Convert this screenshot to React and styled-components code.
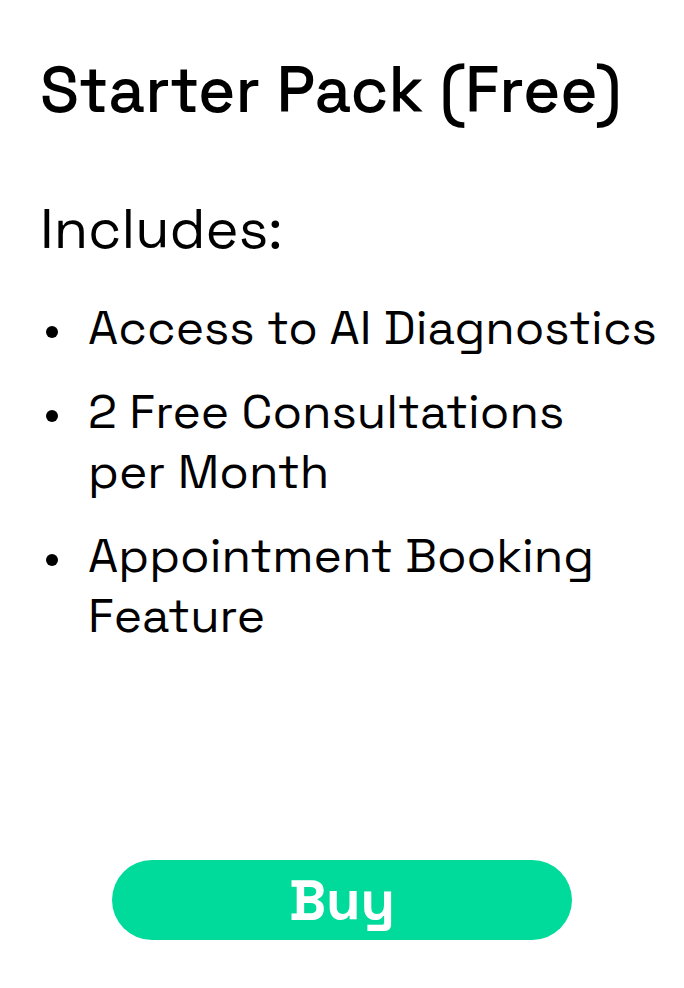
import React from "react";
import styled, { createGlobalStyle } from "styled-components";

const GlobalStyle = createGlobalStyle`
  *, *::before { box-sizing: border-box; }
  body { margin: 0; background: #fff; }
`;

const Card = styled.main`
  display: flex;
  flex-direction: column;
  min-height: 100vh;
  padding: 48px 24px;
  color: #000;
  font-family: "Space Grotesk", Inter, sans-serif;
`;

const Details = styled.section`
  padding-left: 16px;
`;

const Title = styled.h1`
  margin: 0;
  font-size: 64px;
  line-height: 84px;
  font-weight: 500;
`;

const Subtitle = styled.h2`
  margin: 62px 0 0;
  font-size: 56px;
  line-height: 70px;
  font-weight: 400;
`;

const Features = styled.ul`
  display: flex;
  flex-direction: column;
  gap: 24px;
  margin: 34px 0 48px;
  padding: 0;
  list-style: none;
`;

const Feature = styled.li`
  display: flex;
  font-size: 48px;
  line-height: 60px;

  &::before {
    content: "";
    flex: none;
    width: 12px;
    height: 12px;
    margin: 28px 30px 0 6px;
    border-radius: 50%;
    background: #000;
  }
`;

const BuyButton = styled.button`
  width: 460px;
  max-width: 100%;
  height: 80px;
  margin: auto auto 0;
  padding: 2px 0 0;
  border: 0;
  border-radius: 40px;
  background: #00da9a;
  color: #fff;
  font-family: inherit;
  font-size: 56px;
  line-height: 72px;
  font-weight: 700;
  cursor: pointer;
`;

const features = [
  ["Access to AI Diagnostics"],
  ["2 Free Consultations", "per Month"],
  ["Appointment Booking", "Feature"],
];

export default function App() {
  return (
    <>
      <GlobalStyle />
      <Card>
        <Details>
          <Title>Starter Pack (Free)</Title>
          <Subtitle>Includes:</Subtitle>
          <Features>
            {features.map(([first, second]) => (
              <Feature key={first}>
                <span>
                  {first}
                  {second && <><br />{second}</>}
                </span>
              </Feature>
            ))}
          </Features>
        </Details>
        <BuyButton type="button">Buy</BuyButton>
      </Card>
    </>
  );
}
